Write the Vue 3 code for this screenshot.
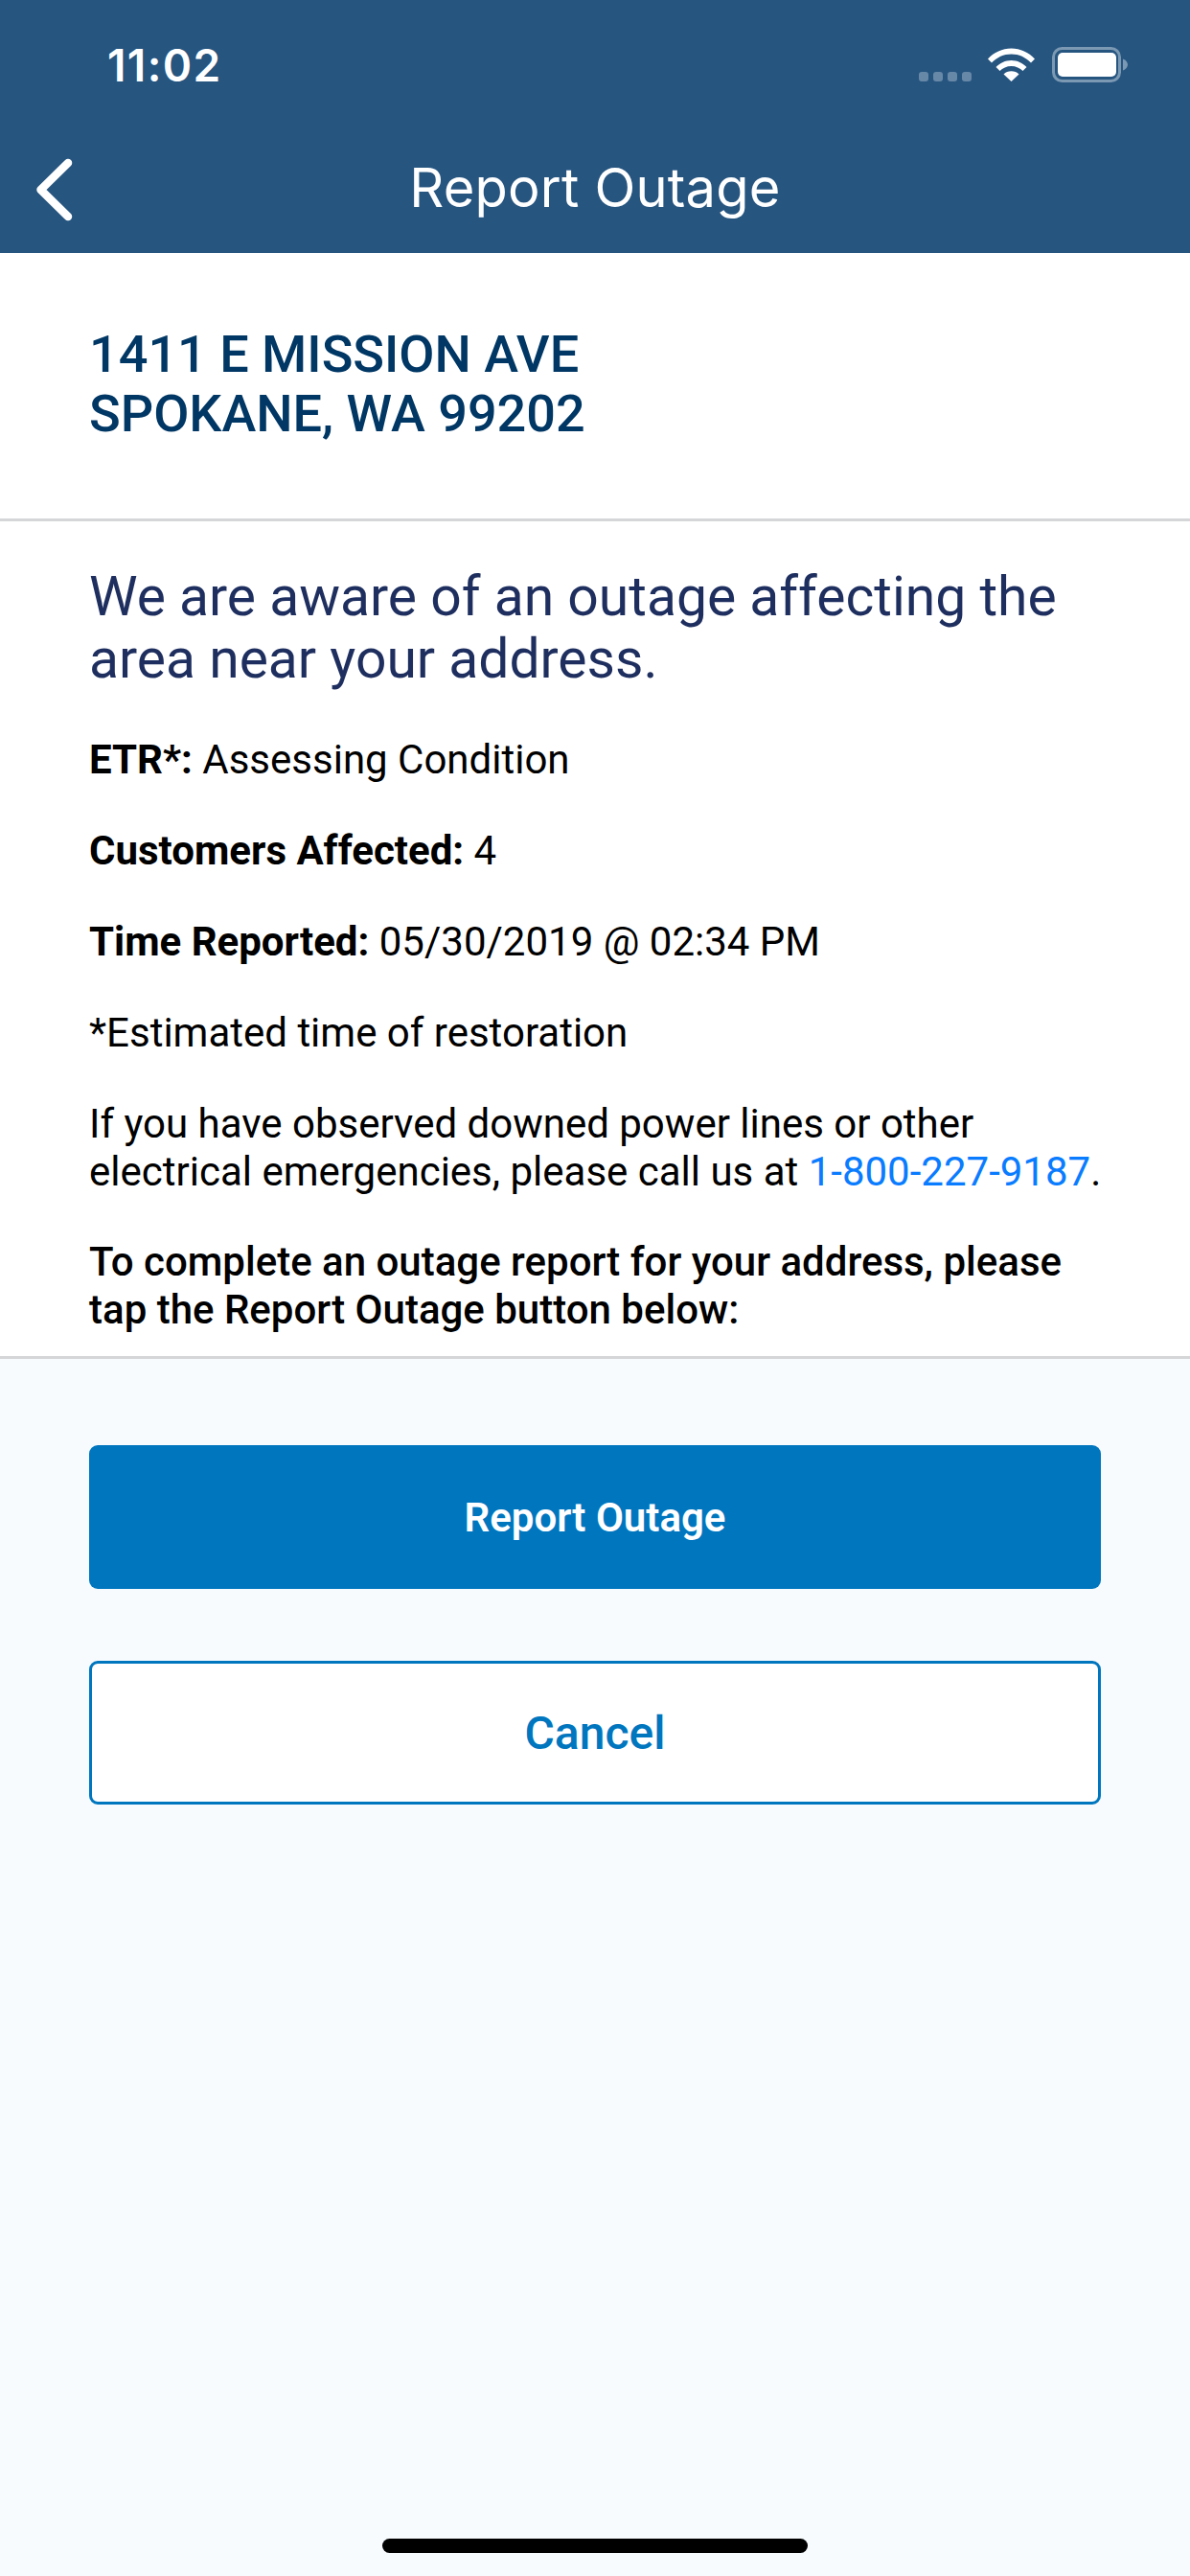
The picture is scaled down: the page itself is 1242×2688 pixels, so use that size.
<template>
  <div class="screen">
    <header class="top">
      <div class="status">
        <span class="time">11:02</span>
        <div class="status-icons">
          <svg class="signal" width="55" height="10" viewBox="0 0 55 10">
            <rect v-for="x in [0, 15, 30, 45]" :key="x" :x="x" y="0" width="10" height="10" rx="3" fill="#fff" opacity="0.3" />
          </svg>
          <svg class="wifi" width="50" height="36" viewBox="0 0 50 36">
            <path d="M0 12.5C6.5 5.5 15 1.500 24.500 1.500S42.500 5.500 49 12.500L45 16.500C39.500 10.800 32.500 7.500 24.500 7.500S9.500 10.800 4 16.500Z" fill="#fff" />
            <path d="M8.500 21C12.500 16.800 18.300 14 24.500 14S36.500 16.800 40.500 21L36.500 25C33.500 22 29.300 20 24.500 20S15.500 22 12.500 25Z" fill="#fff" />
            <path d="M16.500 28.500C18.500 26.500 21.300 25.300 24.500 25.300S30.500 26.500 32.500 28.500L24.500 36Z" fill="#fff" />
          </svg>
          <svg class="battery" width="79" height="37" viewBox="0 0 79 37">
            <rect x="1.500" y="1.500" width="69" height="34" rx="9" fill="none" stroke="#fff" stroke-opacity="0.4" stroke-width="3" />
            <rect x="6" y="6" width="61" height="25" rx="5" fill="#fff" />
            <path d="M74 12.500C77 13.500 79 16 79 18.500S77 23.500 74 24.500Z" fill="#fff" opacity="0.4" />
          </svg>
        </div>
      </div>
      <div class="navbar">
        <svg class="back" width="42" height="66" viewBox="0 0 42 66">
          <path d="M35 5L6.500 33L35 61" fill="none" stroke="#fff" stroke-width="8.500" stroke-linecap="round" stroke-linejoin="round" />
        </svg>
        <h1 class="title">Report Outage</h1>
      </div>
    </header>

    <section class="address">
      <p>1411 E MISSION AVE</p>
      <p>SPOKANE, WA 99202</p>
    </section>

    <section class="details">
      <h2 class="headline">We are aware of an outage affecting the area near your address.</h2>
      <p class="row"><b>ETR*:</b> Assessing Condition</p>
      <p class="row"><b>Customers Affected:</b> 4</p>
      <p class="row"><b>Time Reported:</b> 05/30/2019 @ 02:34 PM</p>
      <p class="row">*Estimated time of restoration</p>
      <p class="note">If you have observed downed power lines or other electrical emergencies, please call us at <a class="phone">1-800-227-9187</a>.</p>
      <p class="note strong">To complete an outage report for your address, please tap the Report Outage button below:</p>
    </section>

    <section class="actions">
      <button class="btn primary">Report Outage</button>
      <button class="btn outline">Cancel</button>
    </section>

    <div class="home-bar"></div>
  </div>
</template>

<script setup>
</script>

<style>
html, body {
  margin: 0;
  padding: 0;
  background: #f7fbfe;
}
</style>

<style scoped>
.screen {
  position: relative;
  width: 1242px;
  height: 2688px;
  display: flex;
  flex-direction: column;
  overflow: hidden;
  background: #f7fbfe;
  font-family: Roboto, "Liberation Sans", sans-serif;
  color: #000;
}
p, h1, h2 {
  margin: 0;
}
.top {
  height: 264px;
  flex: none;
  box-sizing: border-box;
  background: #265580;
  color: #fff;
  font-family: Inter, "Liberation Sans", sans-serif;
}
.status {
  height: 132px;
  box-sizing: border-box;
  padding: 44px 65px 0 112px;
  display: flex;
  justify-content: space-between;
  align-items: flex-start;
}
.time {
  font-size: 46px;
  font-weight: 600;
  line-height: 48px;
  letter-spacing: 1.4px;
}
.status-icons {
  display: flex;
  align-items: flex-end;
  gap: 17px;
  height: 40px;
  margin-top: 2px;
}
.signal,
.wifi {
  margin-bottom: 1px;
}
.navbar {
  position: relative;
  height: 132px;
  display: flex;
  align-items: center;
  justify-content: center;
}
.back {
  position: absolute;
  left: 36px;
  top: 33px;
}
.title {
  font-size: 56px;
  font-weight: 400;
  line-height: 64px;
  letter-spacing: 0.2px;
  position: relative;
  top: -2px;
}
.address {
  height: 280px;
  flex: none;
  box-sizing: border-box;
  padding: 75px 93px 0;
  background: #fff;
  border-bottom: 3px solid #d4d6d8;
  color: #003764;
  font-size: 54px;
  font-weight: 500;
  line-height: 62px;
}
.details {
  height: 874px;
  flex: none;
  box-sizing: border-box;
  padding: 46px 78px 0 93px;
  background: #fff;
  border-bottom: 3px solid #d4d6d8;
  font-size: 42px;
  line-height: 50px;
}
.headline {
  font-size: 57px;
  font-weight: 400;
  line-height: 65px;
  color: #1e2f5f;
  margin-bottom: 48px;
}
.row {
  margin-bottom: 45px;
}
.note {
  margin-bottom: 44px;
}
.note.strong {
  font-weight: 500;
}
.row b {
  font-weight: 700;
}
.phone {
  color: #0a7cff;
}
.actions {
  padding: 90px 93px 0;
  display: flex;
  flex-direction: column;
  gap: 75px;
}
.btn {
  height: 150px;
  border-radius: 9px;
  font-family: inherit;
  font-size: 42px;
  font-weight: 600;
  box-sizing: border-box;
  padding: 0;
}
.primary {
  background: #0076bf;
  border: none;
  color: #fff;
}
.outline {
  background: #fff;
  border: 3px solid #0076bf;
  color: #0076bf;
  font-size: 48px;
  font-weight: 500;
}
.home-bar {
  position: absolute;
  left: 399px;
  bottom: 24px;
  width: 444px;
  height: 15px;
  border-radius: 8px;
  background: #000;
}
</style>
